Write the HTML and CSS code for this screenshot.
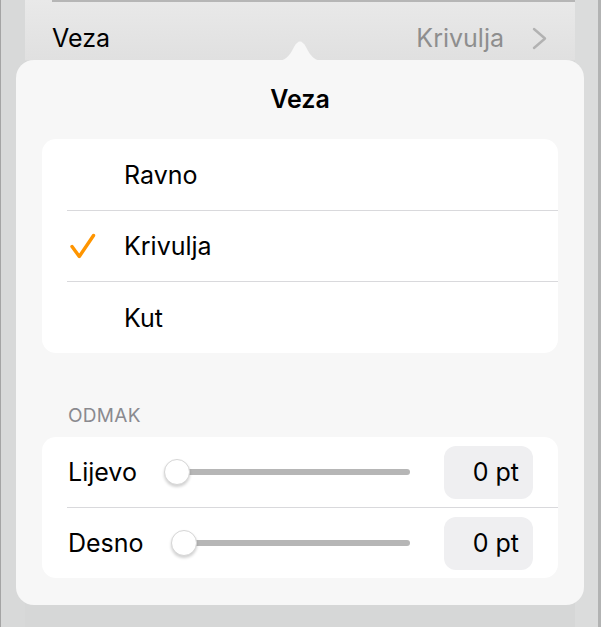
FILE: index.html
```html
<!DOCTYPE html>
<html lang="hr">
<head>
    <meta charset="UTF-8">
    <meta name="viewport" content="width=device-width, initial-scale=1.0">
    <title>Veza</title>
    <link rel="stylesheet" href="styles.css">
</head>
<body>
<div class="screen">
    <div class="strip-left"></div>
    <div class="panel">
        <div class="rule"></div>
        <div class="panel-row">
            <span>Veza</span>
            <span class="panel-value">Krivulja
                <svg class="chevron" width="16" height="24" viewBox="0 0 16 24"><polyline points="2,2 13,11.5 2,21" fill="none" stroke="#b2b2b2" stroke-width="2.4" stroke-linecap="round" stroke-linejoin="round"/></svg>
            </span>
        </div>
    </div>
    <div class="strip-right"></div>

    <div class="popover">
        <svg class="arrow" width="48" height="24" viewBox="0 0 48 24"><path d="M0,24 C9,24 13,20 18,10 Q24,-1 30,10 C35,20 39,24 48,24 Z" fill="#f7f7f7"/></svg>
        <div class="title">Veza</div>

        <div class="group">
            <div class="option"><span class="check-slot"></span>Ravno</div>
            <div class="option">
                <span class="check-slot">
                    <svg width="26" height="26" viewBox="0 0 26 26"><polyline points="2,13.5 9.3,23.5 23.5,2.5" fill="none" stroke="#ff9500" stroke-width="3.4" stroke-linecap="round" stroke-linejoin="round"/></svg>
                </span>Krivulja
            </div>
            <div class="option">
                <span class="check-slot"></span>Kut
            </div>
        </div>

        <div class="section-label">ODMAK</div>

        <div class="group">
            <div class="slider-row">
                <span>Lijevo</span>
                <div class="slider"><div class="track"></div><div class="thumb"></div></div>
                <div class="value-box">0 pt</div>
            </div>
            <div class="slider-row">
                <span>Desno</span>
                <div class="slider"><div class="track"></div><div class="thumb"></div></div>
                <div class="value-box">0 pt</div>
            </div>
        </div>
    </div>
</div>
</body>
</html>
```

FILE: styles.css
```css
:root {
    --dim-bg: #d6d7d7;
    --popover-bg: #f7f7f7;
    --separator: #d9d9dc;
    --label-gray: #8a8a8f;
}
body {
    margin: 0;
    font-family: 'Inter', 'Liberation Sans', sans-serif;
    color: #000;
}
.screen {
    position: relative;
    display: flex;
    width: 601px;
    height: 627px;
    background: var(--dim-bg);
    overflow: hidden;
}
.strip-left {
    width: 25px;
    border-left: 1px solid #a4a4a4;
    box-sizing: border-box;
    background: #d8d9d9;
}
.strip-right {
    flex: 1;
    border-right: 3px solid #b2b3b3;
    background: #dbdcdc;
}
.panel {
    width: 550px;
    background: linear-gradient(#e9e9e9, #e0e0e0 60px, var(--dim-bg) 61px);
}
.rule {
    height: 2px;
    margin-left: 27px;
    background: #b6b6b6;
}
.panel-row {
    display: flex;
    justify-content: space-between;
    padding: 21px 27px 0;
    font-size: 25px;
    line-height: 30px;
}
.panel-value {
    display: flex;
    align-items: center;
    gap: 28px;
    color: #8e8e8e;
}
.chevron {
    margin-top: 2px;
}
.popover {
    position: absolute;
    left: 16px;
    top: 60px;
    width: 568px;
    height: 545px;
    box-sizing: border-box;
    padding: 0 26px;
    border-radius: 18px;
    background: var(--popover-bg);
}
.arrow {
    position: absolute;
    top: -23px;
    left: 260px;
}
.title {
    height: 79px;
    box-sizing: border-box;
    padding-top: 24px;
    text-align: center;
    font-size: 25px;
    line-height: 30px;
    font-weight: 600;
}
.group {
    background: #fff;
    border-radius: 14px;
}
.option {
    display: flex;
    align-items: center;
    height: 72px;
    box-sizing: border-box;
    margin-left: 25px;
    border-bottom: 1px solid var(--separator);
    font-size: 25px;
    line-height: 30px;
}
.option + .option {
    height: 71px;
}
.option:last-child {
    border-bottom: none;
}
.check-slot {
    display: flex;
    width: 57px;
    padding-left: 3px;
    box-sizing: border-box;
}
.section-label {
    height: 84px;
    box-sizing: border-box;
    padding: 51px 0 0 26px;
    font-size: 19px;
    line-height: 23px;
    letter-spacing: 0.3px;
    color: var(--label-gray);
}
.slider-row {
    display: flex;
    align-items: center;
    height: 70px;
    margin-left: 25px;
    padding: 0 25px 0 1px;
    font-size: 25px;
    line-height: 30px;
}
.slider-row:first-child {
    border-bottom: 1px solid var(--separator);
}
.slider {
    position: relative;
    flex: 1;
    height: 26px;
    margin: 0 34px 0 27px;
}
.track {
    position: absolute;
    left: 13px;
    right: 0;
    top: 10px;
    height: 6px;
    border-radius: 3px;
    background: #b6b6b6;
}
.thumb {
    position: absolute;
    left: 0;
    top: 0;
    width: 26px;
    height: 26px;
    box-sizing: border-box;
    border-radius: 50%;
    border: 1px solid #d6d6d6;
    background: #fff;
    box-shadow: 0 2px 3px rgba(0, 0, 0, 0.18);
}
.value-box {
    width: 89px;
    height: 53px;
    box-sizing: border-box;
    padding-right: 14px;
    border-radius: 12px;
    background: #efeff1;
    text-align: right;
    font-size: 25px;
    line-height: 53px;
}
```
